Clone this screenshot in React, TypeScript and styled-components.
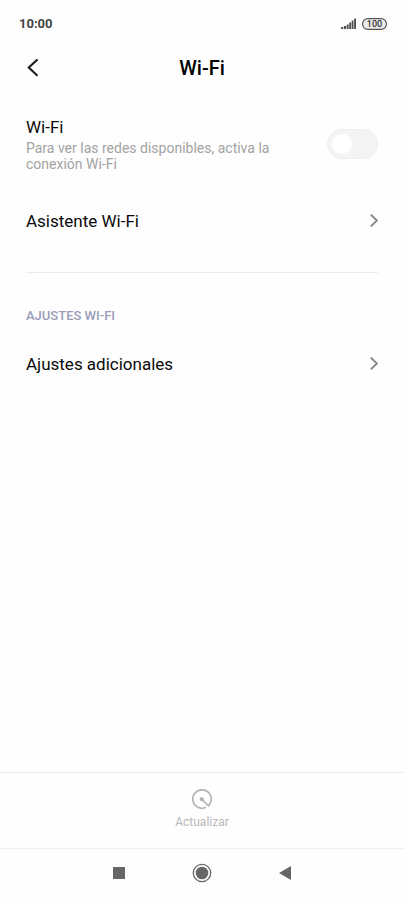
import React, { useState } from "react";
import styled, { createGlobalStyle } from "styled-components";

const GlobalStyle = createGlobalStyle`
  * { box-sizing: border-box; }
  body {
    margin: 0;
    background: #fefefe;
    color: #0a0a0a;
    font-family: Roboto, "Liberation Sans", sans-serif;
  }
  button {
    font: inherit;
    color: inherit;
    background: none;
    border: 0;
    padding: 0;
    cursor: pointer;
  }
  svg { display: block; }
`;

const Screen = styled.div`
  display: flex;
  flex-direction: column;
  min-height: 100vh;
`;

const StatusBar = styled.div`
  display: flex;
  align-items: center;
  justify-content: space-between;
  height: 48px;
  padding: 0 17px 0 19px;
`;

const Clock = styled.time`
  font-size: 13px;
  line-height: 16px;
  font-weight: 700;
  color: #444;
`;

const StatusIcons = styled.div`
  display: flex;
  align-items: center;
  gap: 6px;
`;

const Battery = styled.svg`
  font-size: 9px;
  font-weight: 500;
`;

const Header = styled.header`
  display: grid;
  grid-template-columns: 40px 1fr 40px;
  align-items: center;
  height: 40px;
  padding: 0 13px;
`;

const BackButton = styled.button`
  display: flex;
  align-items: center;
  justify-content: center;
  height: 40px;
`;

const Title = styled.h1`
  margin: 0;
  text-align: center;
  font-size: 20px;
  line-height: 24px;
  font-weight: 500;
  color: #000;
`;

const Content = styled.main`
  flex: 1;
  padding: 27px 26px;
`;

const WifiRow = styled.label`
  display: flex;
  align-items: center;
  justify-content: space-between;
  gap: 24px;
  cursor: pointer;
`;

const RowText = styled.span`
  flex: 1;
  max-width: 264px;
`;

const RowTitle = styled.span`
  display: block;
  font-size: 17px;
  line-height: 24px;
`;

const RowHint = styled.span`
  display: block;
  margin-top: 1px;
  font-size: 14px;
  line-height: 16px;
  color: #a3a3a3;
`;

const Switch = styled.input`
  appearance: none;
  display: flex;
  align-items: center;
  flex: none;
  width: 51px;
  height: 30px;
  margin: 0;
  padding: 0 4px;
  border: 1px solid #eee;
  border-radius: 15px;
  background: #f4f4f4;
  cursor: pointer;

  &::before {
    content: "";
    width: 20px;
    height: 20px;
    border-radius: 50%;
    background: #fff;
  }

  &:checked {
    justify-content: flex-end;
    background: #3482ff;
  }
`;

const LinkRow = styled.a`
  display: flex;
  align-items: center;
  justify-content: space-between;
  height: 48px;
  color: inherit;
  text-decoration: none;
`;

const Group = styled.section`
  & + & {
    margin-top: 27px;
    padding-top: 34px;
    border-top: 1px solid #ebebeb;
  }
`;

const AssistantSlot = styled.div`
  margin-top: 25px;
`;

const GroupTitle = styled.h2`
  margin: 0 0 15px;
  font-size: 13px;
  line-height: 18px;
  font-weight: 500;
  color: #9a9db8;
`;

const Footer = styled.footer`
  display: flex;
  justify-content: center;
  height: 76px;
  padding-top: 16px;
  border-top: 1px solid #ebebeb;
`;

const RefreshButton = styled.button`
  display: flex;
  flex-direction: column;
  align-items: center;
  gap: 3px;
  height: 42px;
  font-size: 12px;
  line-height: 16px;
  color: #b8b8b8;
`;

const NavBar = styled.nav`
  display: flex;
  align-items: center;
  justify-content: center;
  gap: 51px;
  height: 49px;
  border-top: 1px solid #f0f0f0;
`;

const NavButton = styled.button`
  display: flex;
  align-items: center;
  justify-content: center;
  width: 32px;
  height: 32px;
`;

function Signal() {
  return (
    <svg width="15" height="12" viewBox="0 0 15 12" fill="#505050" aria-hidden="true">
      <path d="M0 11V9.6L2.2 8.6V11zM3 8h2v3H3zM5.7 6.4h1.9V11H5.7zM8.2 4.4h1.9V11H8.2zM10.7 2.6h1.8V11h-1.8zM13.1.5h1.9V11h-1.9z" />
    </svg>
  );
}

function BatteryLevel({ level }: { level: number }) {
  return (
    <Battery width="25" height="12" viewBox="0 0 25 12" role="img" aria-label={`Batería ${level}`}>
      <rect x=".6" y=".6" width="23.8" height="10.8" rx="5.2" fill="#ebebeb" stroke="#555" strokeWidth="1.2" />
      <text x="12.5" y="9.2" textAnchor="middle" fill="#333">{level}</text>
    </Battery>
  );
}

function Chevron() {
  return (
    <svg width="8" height="14" viewBox="0 0 8 14" fill="none" stroke="#858585" strokeWidth="1.9" aria-hidden="true">
      <path d="M.8 .6L7 6.5L.8 12.4" />
    </svg>
  );
}

function MenuLink({ children }: { children: React.ReactNode }) {
  return (
    <LinkRow href="#">
      <RowTitle>{children}</RowTitle>
      <Chevron />
    </LinkRow>
  );
}

export default function App() {
  const [enabled, setEnabled] = useState(false);

  return (
    <Screen>
      <GlobalStyle />
      <StatusBar>
        <Clock>10:00</Clock>
        <StatusIcons>
          <Signal />
          <BatteryLevel level={100} />
        </StatusIcons>
      </StatusBar>
      <Header>
        <BackButton aria-label="Atrás">
          <svg width="12" height="18" viewBox="0 0 12 18" fill="none" stroke="#1c1c1c" strokeWidth="2.1">
            <path d="M10.5 .4L1.8 8.6L10.5 16.8" />
          </svg>
        </BackButton>
        <Title>Wi-Fi</Title>
      </Header>
      <Content>
        <Group>
          <WifiRow>
            <RowText>
              <RowTitle>Wi-Fi</RowTitle>
              <RowHint>Para ver las redes disponibles, activa la conexión Wi-Fi</RowHint>
            </RowText>
            <Switch
              type="checkbox"
              role="switch"
              checked={enabled}
              onChange={(event) => setEnabled(event.target.checked)}
            />
          </WifiRow>
          <AssistantSlot>
            <MenuLink>Asistente Wi-Fi</MenuLink>
          </AssistantSlot>
        </Group>
        <Group>
          <GroupTitle>AJUSTES WI-FI</GroupTitle>
          <MenuLink>Ajustes adicionales</MenuLink>
        </Group>
      </Content>
      <Footer>
        <RefreshButton>
          <svg width="22" height="22" viewBox="0 0 22 22" fill="none" stroke="#b4b4b4" strokeWidth="1.7" aria-hidden="true">
            <path d="M15 18.3A9.2 9.2 0 1 1 18.6 15.2L17.6 17L10.8 10.3" strokeLinejoin="round" />
            <circle cx="10.8" cy="10.2" r="2.1" fill="#b4b4b4" stroke="none" />
          </svg>
          Actualizar
        </RefreshButton>
      </Footer>
      <NavBar aria-label="Sistema">
        <NavButton aria-label="Recientes">
          <svg width="12" height="12" viewBox="0 0 12 12" fill="#666">
            <rect width="12" height="12" />
          </svg>
        </NavButton>
        <NavButton aria-label="Inicio">
          <svg width="20" height="20" viewBox="0 0 20 20">
            <circle cx="10" cy="10" r="8.7" fill="none" stroke="#666" strokeWidth="1.3" />
            <circle cx="10" cy="10" r="6.3" fill="#666" />
          </svg>
        </NavButton>
        <NavButton aria-label="Volver">
          <svg width="12" height="14" viewBox="0 0 12 14" fill="#666">
            <path d="M12 0V14L0 7z" />
          </svg>
        </NavButton>
      </NavBar>
    </Screen>
  );
}
